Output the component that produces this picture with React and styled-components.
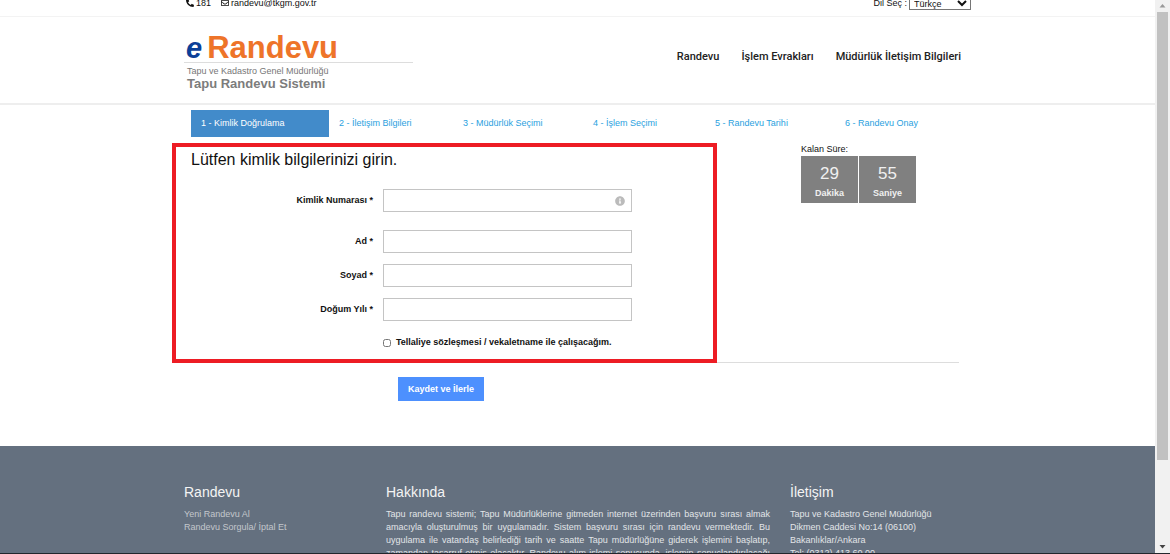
import styled, { createGlobalStyle } from "styled-components";
import { FaPhoneAlt, FaRegEnvelope, FaInfoCircle } from "react-icons/fa";

const GlobalStyle = createGlobalStyle`
  * {
    box-sizing: border-box;
  }

  body {
    margin: 0;
    background: #fff;
    color: #111;
    font-family: "Liberation Sans", Arial, sans-serif;
    font-size: 9px;
    line-height: 13px;
  }

  a {
    color: inherit;
    text-decoration: none;
  }
`;

const Window = styled.div`
  display: grid;
  grid-template-columns: 1fr 15px;
  height: 100vh;
  overflow: hidden;
  border-bottom: 1px solid #22262c;
`;

const Page = styled.div`
  display: flex;
  flex-direction: column;
  min-width: 0;
  overflow: hidden;
`;

const Container = styled.div`
  width: 100%;
  max-width: 787px;
  margin: 0 auto;
`;

/* top bar */
const TopBar = styled.div`
  flex: none;
  height: 17px;
  border-bottom: 1px solid #f3f3f3;
`;

const TopBarInner = styled(Container)`
  display: flex;
  align-items: center;
  justify-content: space-between;
  height: 14px;
  margin-top: -4px;
`;

const Contacts = styled.div`
  display: flex;
  gap: 10px;
  padding-left: 2px;
`;

const Contact = styled.a`
  display: flex;
  align-items: center;
  gap: 2px;

  svg {
    width: 8px;
    height: 8px;
  }
`;

const Language = styled.label`
  display: flex;
  align-items: center;
  gap: 2px;
`;

const LanguageSelect = styled.select`
  width: 62px;
  height: 13px;
  padding: 0;
  border: 1px solid #767676;
  border-radius: 0;
  background: #fff;
  color: #111;
  font-family: inherit;
  font-size: 9px;
`;

/* header */
const Header = styled.header`
  flex: none;
  border-bottom: 2px solid #eee;
`;

const HeaderInner = styled(Container)`
  display: flex;
  align-items: flex-start;
  justify-content: space-between;
  padding: 15px 10px 13px 0;
`;

const Logo = styled.a`
  display: block;
  width: 229px;
`;

const LogoTitle = styled.div`
  display: flex;
  align-items: baseline;
  gap: 5px;
  height: 31px;
  padding-left: 2px;
  border-bottom: 1px solid #ddd;
  color: #ee7429;
  font-size: 31px;
  font-weight: bold;
  line-height: 31px;
`;

const LogoLetter = styled.span`
  color: #0b3f98;
  font-size: 29px;
  font-style: italic;
`;

const LogoOwner = styled.div`
  padding: 2px 0 0 3px;
  color: #777;
  line-height: 12px;
`;

const LogoSystem = styled.div`
  padding-left: 3px;
  color: #7c7c7c;
  font-size: 13px;
  font-weight: bold;
`;

const Nav = styled.nav`
  display: flex;
  gap: 22px;
  padding-top: 18px;
  color: #222;
  font-family: Roboto, "Liberation Sans", sans-serif;
  font-size: 11px;
  font-weight: 500;
`;

/* wizard */
const Main = styled.main`
  flex: none;
  width: 100%;
  max-width: 787px;
  min-height: 341px;
  margin: 0 auto;
  padding: 5px 12px 0 7px;
`;

const Steps = styled.nav`
  display: grid;
  grid-template-columns: 138fr 124fr 130fr 122fr 130fr 124fr;
`;

const Step = styled.a`
  padding: 7px 0 7px 10px;
  background: ${(props) => (props.$active ? "#428bca" : "transparent")};
  color: ${(props) => (props.$active ? "#fff" : "#2a9fe0")};
`;

const Columns = styled.div`
  display: flex;
  align-items: flex-start;
  gap: 84px;
  padding-top: 6px;
`;

const IdentityPanel = styled.section`
  flex: 0 1 545px;
  margin-left: -19px;
  padding: 0 15px 10px;
  border: 4px solid #ed1c24;
`;

const PanelTitle = styled.h1`
  margin: 0 0 16px;
  font-size: 16px;
  font-weight: normal;
  line-height: 26px;
`;

const Field = styled.div`
  display: grid;
  grid-template-columns: 182px 249px;
  align-items: center;
  column-gap: 10px;
  margin-bottom: ${(props) => (props.$spaced ? "18px" : "11px")};
`;

const FieldLabel = styled.label`
  text-align: right;
  font-weight: bold;
`;

const InputBox = styled.div`
  display: flex;
  align-items: center;
  height: 23px;
  padding-right: 6px;
  border: 1px solid #c4c4c4;
  color: #bbb;

  svg {
    width: 10px;
    height: 10px;
  }
`;

const Input = styled.input`
  flex: 1;
  min-width: 0;
  height: 100%;
  border: 0;
  outline: 0;
  background: transparent;
  font: inherit;
  color: #111;
`;

const Agreement = styled.label`
  display: flex;
  align-items: center;
  gap: 5px;
  padding: 4px 0 0 192px;
  font-weight: bold;

  input {
    width: 8px;
    height: 8px;
    margin: 0;
  }
`;

const Countdown = styled.aside`
  flex: none;
`;

const CountdownUnits = styled.div`
  display: flex;
  gap: 1px;
`;

const CountdownUnit = styled.div`
  width: 57px;
  padding: 8px 0 3px;
  background: #808080;
  color: #f0f0f0;
  text-align: center;
  font-weight: bold;
`;

const CountdownValue = styled.div`
  margin-bottom: 3px;
  font-size: 17px;
  font-weight: normal;
  line-height: 20px;
`;

/* negative z-index keeps the red frame above the rule */
const Actions = styled.div`
  position: relative;
  z-index: -1;
  margin-top: -1px;
  padding: 14px 0 0 207px;
  border-top: 1px solid #ddd;
`;

const SaveButton = styled.button`
  height: 24px;
  padding: 0 10px;
  border: 0;
  background: #4d90fe;
  color: #fff;
  font-family: inherit;
  font-size: 9px;
  font-weight: bold;
`;

/* footer */
const Footer = styled.footer`
  flex: 1 0 auto;
  background: #64707f;
  color: #e2e5e8;
`;

const FooterInner = styled(Container)`
  display: grid;
  grid-template-columns: 182px 384px 1fr;
  gap: 20px;
  padding-top: 36px;
`;

const FooterTitle = styled.h2`
  margin: 0 0 6px;
  color: #f4f4f4;
  font-size: 14px;
  font-weight: normal;
  line-height: 20px;
`;

const FooterText = styled.div`
  display: flex;
  flex-direction: column;
  color: ${(props) => (props.$muted ? "#c3c7cc" : "inherit")};
`;

const About = styled.p`
  margin: 0;
  text-align: justify;
  text-align-last: justify;
`;

/* scroll bar */
const ScrollTrack = styled.div`
  display: flex;
  flex-direction: column;
  align-items: center;
  background: #f1f1f1;
`;

const ScrollArrow = styled.svg`
  flex: none;
  width: 7px;
  height: 12px;
  fill: ${(props) => (props.$dim ? "#999" : "#444")};
`;

const ScrollThumb = styled.div`
  flex: 0 1 81%;
  width: 11px;
  margin-bottom: auto;
  background: #c1c1c1;
`;

const steps = [
  "1 - Kimlik Doğrulama",
  "2 - İletişim Bilgileri",
  "3 - Müdürlük Seçimi",
  "4 - İşlem Seçimi",
  "5 - Randevu Tarihi",
  "6 - Randevu Onay",
];

const fields = [
  { id: "kimlik", label: "Kimlik Numarası *", info: true },
  { id: "ad", label: "Ad *" },
  { id: "soyad", label: "Soyad *" },
  { id: "dogum", label: "Doğum Yılı *" },
];

const countdown = [
  { value: 29, unit: "Dakika" },
  { value: 55, unit: "Saniye" },
];

export default function App() {
  return (
    <Window lang="tr">
      <GlobalStyle />
      <Page>
        <TopBar>
          <TopBarInner>
            <Contacts>
              <Contact href="tel:181">
                <FaPhoneAlt />
                181
              </Contact>
              <Contact href="mailto:randevu@tkgm.gov.tr">
                <FaRegEnvelope />
                randevu@tkgm.gov.tr
              </Contact>
            </Contacts>
            <Language>
              Dil Seç :
              <LanguageSelect>
                <option>Türkçe</option>
              </LanguageSelect>
            </Language>
          </TopBarInner>
        </TopBar>

        <Header>
          <HeaderInner>
            <Logo href="#">
              <LogoTitle>
                <LogoLetter>e</LogoLetter>
                Randevu
              </LogoTitle>
              <LogoOwner>Tapu ve Kadastro Genel Müdürlüğü</LogoOwner>
              <LogoSystem>Tapu Randevu Sistemi</LogoSystem>
            </Logo>
            <Nav>
              <a href="#randevu">Randevu</a>
              <a href="#evrak">İşlem Evrakları</a>
              <a href="#iletisim">Müdürlük İletişim Bilgileri</a>
            </Nav>
          </HeaderInner>
        </Header>

        <Main>
          <Steps>
            {steps.map((step, index) => (
              <Step key={step} href="#" $active={index === 0}>
                {step}
              </Step>
            ))}
          </Steps>
          <form>
            <Columns>
              <IdentityPanel>
                <PanelTitle>Lütfen kimlik bilgilerinizi girin.</PanelTitle>
                {fields.map((field) => (
                  <Field key={field.id} $spaced={field.info}>
                    <FieldLabel htmlFor={field.id}>{field.label}</FieldLabel>
                    <InputBox>
                      <Input id={field.id} type="text" />
                      {field.info && <FaInfoCircle />}
                    </InputBox>
                  </Field>
                ))}
                <Agreement>
                  <input type="checkbox" />
                  Tellaliye sözleşmesi / vekaletname ile çalışacağım.
                </Agreement>
              </IdentityPanel>
              <Countdown>
                Kalan Süre:
                <CountdownUnits>
                  {countdown.map((item) => (
                    <CountdownUnit key={item.unit}>
                      <CountdownValue>{item.value}</CountdownValue>
                      {item.unit}
                    </CountdownUnit>
                  ))}
                </CountdownUnits>
              </Countdown>
            </Columns>
            <Actions>
              <SaveButton type="button">Kaydet ve İlerle</SaveButton>
            </Actions>
          </form>
        </Main>

        <Footer>
          <FooterInner>
            <div>
              <FooterTitle>Randevu</FooterTitle>
              <FooterText $muted>
                <a href="#yeni">Yeni Randevu Al</a>
                <a href="#sorgula">Randevu Sorgula/ İptal Et</a>
              </FooterText>
            </div>
            <div>
              <FooterTitle>Hakkında</FooterTitle>
              <About>
                Tapu randevu sistemi; Tapu Müdürlüklerine gitmeden internet
                üzerinden başvuru sırası almak amacıyla oluşturulmuş bir
                uygulamadır. Sistem başvuru sırası için randevu vermektedir. Bu
                uygulama ile vatandaş belirlediği tarih ve saatte Tapu
                müdürlüğüne giderek işlemini başlatıp, zamandan tasarruf etmiş
                olacaktır. Randevu alım işlemi sonucunda, işlemin
                sonuçlandırılacağı
              </About>
            </div>
            <div>
              <FooterTitle>İletişim</FooterTitle>
              <FooterText>
                <span>Tapu ve Kadastro Genel Müdürlüğü</span>
                <span>Dikmen Caddesi No:14 (06100)</span>
                <span>Bakanlıklar/Ankara</span>
                <span>Tel: (0312) 413 60 00</span>
              </FooterText>
            </div>
          </FooterInner>
        </Footer>
      </Page>

      <ScrollTrack aria-hidden="true">
        <ScrollArrow $dim viewBox="0 0 7 12">
          <path d="M0.5 7.5 3.5 4l3 3.5z" />
        </ScrollArrow>
        <ScrollThumb />
        <ScrollArrow viewBox="0 0 7 12">
          <path d="M0.5 4 3.5 7.5l3-3.5z" />
        </ScrollArrow>
      </ScrollTrack>
    </Window>
  );
}
